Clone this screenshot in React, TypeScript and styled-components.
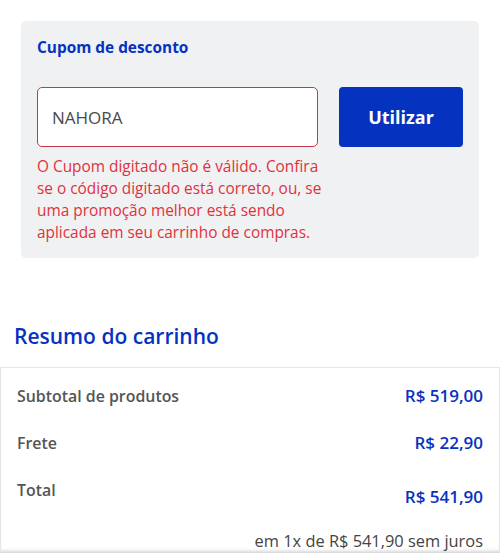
import React from 'react';
import styled, {createGlobalStyle} from 'styled-components';

const blue = '#0632c0';
const red = '#e1323c';

const GlobalStyle = createGlobalStyle`
  html, body {
    margin: 0;
    padding: 0;
    background: #ffffff;
    font-family: "Open Sans", Lato, sans-serif;
  }
`

const Page = styled.div`
  width: 500px;
  height: 553px;
  overflow: hidden;
  display: flex;
  flex-direction: column;
`

const CouponCard = styled.section`
  margin: 21px 21px 0;
  background: #f0f1f3;
  border-radius: 5px;
  padding: 17px 16px 16px;
  height: 237px;
  box-sizing: border-box;
`

const CouponTitle = styled.h3`
  margin: 0;
  color: ${blue};
  font-size: 15.4px;
  font-weight: 700;
  line-height: 20px;
`

const CouponRow = styled.div`
  display: flex;
  gap: 21px;
  margin-top: 29px;
`

const InputCol = styled.div`
  display: flex;
  flex-direction: column;
  width: 281px;
`

const CouponInput = styled.input`
  height: 60px;
  box-sizing: border-box;
  border: 1.5px solid #c23a4b;
  border-radius: 5px;
  background: #ffffff;
  padding: 0 14px;
  font-family: inherit;
  font-size: 17px;
  color: #4a4a4a;
  outline: none;
  width: 100%;
`

const ApplyBtn = styled.button`
  width: 125px;
  height: 60px;
  border: none;
  border-radius: 4px;
  background: ${blue};
  color: #ffffff;
  font-family: inherit;
  font-size: 18px;
  font-weight: 700;
  cursor: pointer;
`

const ErrorText = styled.p`
  margin: 9px 0 0;
  width: 298px;
  color: ${red};
  font-size: 15.4px;
  line-height: 22px;
`

const SummaryTitle = styled.h2`
  margin: 64px 0 0 14px;
  color: ${blue};
  font-size: 21px;
  font-weight: 600;
  line-height: 28px;
`

const SummaryBox = styled.div`
  margin-top: 17px;
  border: 1px solid #e3e6ea;
  border-bottom: none;
  display: flex;
  flex-direction: column;
  padding: 4px 16px 0 16px;
  flex: 1;
  box-shadow: inset 0 -4px 4px -3px rgba(0, 0, 0, 0.25);
`

const Row = styled.div`
  display: flex;
  justify-content: space-between;
  align-items: center;
  height: 47px;
`

const Label = styled.span`
  color: #555555;
  font-size: 15.9px;
  font-weight: 600;
`

const Value = styled.span<{ $shift?: number }>`
  color: ${blue};
  font-size: 17px;
  font-weight: 600;
  margin-top: ${p => p.$shift || 0}px;
`

const Installments = styled.div`
  text-align: right;
  color: #444444;
  font-size: 16.4px;
  line-height: 22px;
  margin-top: 17px;
`

export default function App() {
  return (
    <>
      <GlobalStyle />
      <Page>
        <CouponCard>
          <CouponTitle>Cupom de desconto</CouponTitle>
          <CouponRow>
            <InputCol>
              <CouponInput defaultValue="NAHORA" />
              <ErrorText>
                O Cupom digitado não é válido. Confira se o código digitado está correto, ou, se uma promoção melhor está sendo aplicada em seu carrinho de compras.
              </ErrorText>
            </InputCol>
            <ApplyBtn>Utilizar</ApplyBtn>
          </CouponRow>
        </CouponCard>
        <SummaryTitle>Resumo do carrinho</SummaryTitle>
        <SummaryBox>
          <Row>
            <Label>Subtotal de produtos</Label>
            <Value>R$ 519,00</Value>
          </Row>
          <Row>
            <Label>Frete</Label>
            <Value>R$ 22,90</Value>
          </Row>
          <Row>
            <Label>Total</Label>
            <Value $shift={14}>R$ 541,90</Value>
          </Row>
          <Installments>em 1x de R$ 541,90 sem juros</Installments>
        </SummaryBox>
      </Page>
    </>
  );
}
